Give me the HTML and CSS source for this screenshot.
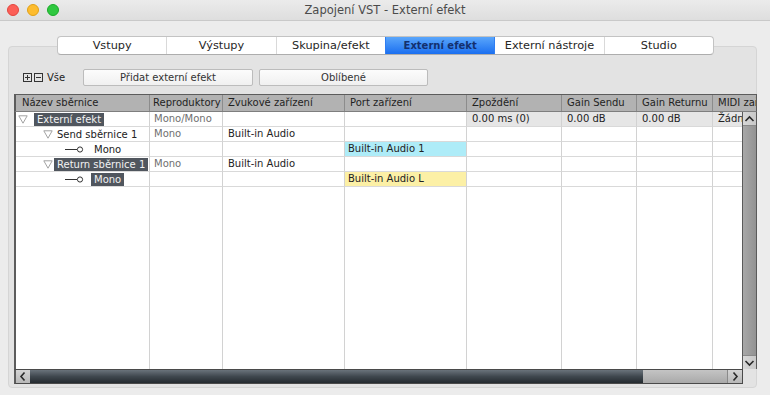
FILE: index.html
```html
<!DOCTYPE html>
<html lang="cs">
<head>
<meta charset="utf-8">
<title>Zapojení VST - Externí efekt</title>
<link rel="stylesheet" href="styles.css">
</head>
<body>
<div class="titlebar">
  <div class="lights"><span class="light l-red"></span><span class="light l-yellow"></span><span class="light l-green"></span></div>
  <div class="title">Zapojení VST - Externí efekt</div>
  <div></div>
</div>
<div class="content">
  <div class="tabs">
    <div class="tab">Vstupy</div>
    <div class="tab">Výstupy</div>
    <div class="tab">Skupina/efekt</div>
    <div class="tab active">Externí efekt</div>
    <div class="tab">Externí nástroje</div>
    <div class="tab">Studio</div>
  </div>
  <div class="group">
    <div class="toolbar">
      <div class="expand">
        <svg class="pm" width="20" height="9" viewBox="0 0 20 9"><rect x="0.5" y="0.5" width="8" height="8" fill="none" stroke="#333"/><path d="M2 4.5h5M4.5 2v5" stroke="#333"/><rect x="11.5" y="0.5" width="8" height="8" fill="none" stroke="#333"/><path d="M13 4.5h5" stroke="#333"/></svg>
        <span>Vše</span>
      </div>
      <button class="btn w1">Přidat externí efekt</button>
      <button class="btn w2">Oblíbené</button>
    </div>
    <div class="table">
      <div class="thead">
        <div class="th c1 first">Název sběrnice</div>
        <div class="th c2 tight">Reproduktory</div>
        <div class="th c3">Zvukové zařízení</div>
        <div class="th c4">Port zařízení</div>
        <div class="th c5">Zpoždění</div>
        <div class="th c6">Gain Sendu</div>
        <div class="th c7">Gain Returnu</div>
        <div class="th c8">MIDI zařízení</div>
      </div>
      <div class="tmain">
        <div class="rows">
          <div class="row">
            <div class="td c1 i0"><svg class="tri" width="10" height="9" viewBox="0 0 10 9"><path d="M0.8 0.8H9.2L5 8.2Z" fill="none" stroke="#a2a2a2"/></svg><span class="name sel gap0">Externí efekt</span></div>
            <div class="td c2 grey">Mono/Mono</div>
            <div class="td c3"></div>
            <div class="td c4"></div>
            <div class="td c5 shade">0.00 ms (0)</div>
            <div class="td c6 shade">0.00 dB</div>
            <div class="td c7 shade">0.00 dB</div>
            <div class="td c8 shade">Žádné</div>
          </div>
          <div class="row">
            <div class="td c1 i1"><svg class="tri" width="10" height="9" viewBox="0 0 10 9"><path d="M0.8 0.8H9.2L5 8.2Z" fill="none" stroke="#a2a2a2"/></svg><span class="name">Send sběrnice 1</span></div>
            <div class="td c2 grey">Mono</div>
            <div class="td c3">Built-in Audio</div>
            <div class="td c4"></div>
            <div class="td c5"></div>
            <div class="td c6"></div>
            <div class="td c7"></div>
            <div class="td c8"></div>
          </div>
          <div class="row">
            <div class="td c1 i2"><svg class="plug" width="20" height="9" viewBox="0 0 20 9"><path d="M0 4.5H12" stroke="#333"/><circle cx="15" cy="4.5" r="2.6" fill="none" stroke="#333"/></svg><span class="name">Mono</span></div>
            <div class="td c2"></div>
            <div class="td c3"></div>
            <div class="td c4 port port-cyan">Built-in Audio 1</div>
            <div class="td c5"></div>
            <div class="td c6"></div>
            <div class="td c7"></div>
            <div class="td c8"></div>
          </div>
          <div class="row">
            <div class="td c1 i1"><svg class="tri" width="10" height="9" viewBox="0 0 10 9"><path d="M0.8 0.8H9.2L5 8.2Z" fill="none" stroke="#a2a2a2"/></svg><span class="name sel">Return sběrnice 1</span></div>
            <div class="td c2 grey">Mono</div>
            <div class="td c3">Built-in Audio</div>
            <div class="td c4"></div>
            <div class="td c5"></div>
            <div class="td c6"></div>
            <div class="td c7"></div>
            <div class="td c8"></div>
          </div>
          <div class="row">
            <div class="td c1 i2"><svg class="plug" width="20" height="9" viewBox="0 0 20 9"><path d="M0 4.5H12" stroke="#333"/><circle cx="15" cy="4.5" r="2.6" fill="none" stroke="#333"/></svg><span class="name sel">Mono</span></div>
            <div class="td c2"></div>
            <div class="td c3"></div>
            <div class="td c4 port port-yellow">Built-in Audio L</div>
            <div class="td c5"></div>
            <div class="td c6"></div>
            <div class="td c7"></div>
            <div class="td c8"></div>
          </div>
          <div class="row filler">
            <div class="td c1"></div>
            <div class="td c2"></div>
            <div class="td c3"></div>
            <div class="td c4"></div>
            <div class="td c5"></div>
            <div class="td c6"></div>
            <div class="td c7"></div>
            <div class="td c8"></div>
          </div>
        </div>
        <div class="vscroll">
          <div class="sbtn vbtn"><svg width="13" height="10" viewBox="0 0 13 10"><path d="M2.5 7L6.5 3L10.5 7" fill="none" stroke="#2a2a2a" stroke-width="1.6"/></svg></div>
          <div class="vtrack"></div>
          <div class="sbtn vbtn"><svg width="13" height="10" viewBox="0 0 13 10"><path d="M2.5 3L6.5 7L10.5 3" fill="none" stroke="#2a2a2a" stroke-width="1.6"/></svg></div>
        </div>
      </div>
      <div class="hbar">
        <div class="hscroll">
          <div class="sbtn hbtn"><svg width="10" height="13" viewBox="0 0 10 13"><path d="M6.5 2.5L3 6.5L6.5 10.5" fill="none" stroke="#2a2a2a" stroke-width="1.6"/></svg></div>
          <div class="thumb"></div>
          <div class="htrack"></div>
          <div class="sbtn hbtn"><svg width="10" height="13" viewBox="0 0 10 13"><path d="M3.5 2.5L7 6.5L3.5 10.5" fill="none" stroke="#2a2a2a" stroke-width="1.6"/></svg></div>
        </div>
      </div>
    </div>
  </div>
</div>
</body>
</html>
```

FILE: styles.css
```css
* { box-sizing: border-box; margin: 0; padding: 0; }
html, body { width: 770px; height: 395px; overflow: hidden; }
body {
  background: #ececec;
  font-family: "DejaVu Sans", "Liberation Sans", sans-serif;
  font-size: 10px;
  color: #222;
}

/* title bar */
.titlebar {
  height: 21px;
  display: grid;
  grid-template-columns: 1fr auto 1fr;
  align-items: center;
  background: linear-gradient(#ebebeb, #dedede);
  border-bottom: 1px solid #c9c9c9;
}
.lights { display: flex; gap: 8px; padding-left: 7px; }
.light { width: 12px; height: 12px; border-radius: 50%; }
.l-red { background: #fc5f57; border: 1px solid #e2463f; }
.l-yellow { background: #fdbc2e; border: 1px solid #e1a116; }
.l-green { background: #2fc840; border: 1px solid #1aab29; }
.title { font-size: 11.5px; color: #4b4b4b; }

/* content */
.content { padding: 15px 0 0 8px; }

.tabs {
  position: relative;
  z-index: 1;
  margin-left: 49px;
  width: 657px;
  height: 19px;
  display: flex;
  background: #fff;
  border: 1px solid #c3c3c3;
  border-bottom-color: #adadad;
  border-radius: 4px;
  overflow: hidden;
}
.tab {
  flex: 1;
  display: flex;
  align-items: center;
  justify-content: center;
  font-size: 11.3px;
  color: #262626;
  border-left: 1px solid #d9d9d9;
}
.tab:first-child { border-left: none; }
.tab.active {
  background: linear-gradient(#5aa6fb, #1b6ff0);
  border-left-color: #2f7ef2;
  color: #13306e;
  font-weight: bold;
  font-size: 10px;
}
.tab.active + .tab { border-left-color: #2f7ef2; }

.group {
  margin-top: -9px;
  width: 749px;
  height: 342px;
  background: #e3e3e3;
  border: 1px solid #d5d5d5;
  border-radius: 4px;
  padding: 22px 0 0 5px;
}

/* toolbar */
.toolbar { display: flex; align-items: center; height: 17px; padding-left: 9px; }
.expand { width: 60px; display: flex; align-items: center; gap: 4px; color: #222; }
.pm { display: block; }
.btn {
  height: 17px;
  font-family: inherit;
  font-size: 10px;
  color: #333;
  background: linear-gradient(#fcfcfc, #f0f0f0);
  border: 1px solid #bcbcbc;
  border-radius: 2px;
}
.w1 { width: 170px; }
.w2 { width: 169px; margin-left: 6px; }

/* table */
.table { margin-top: 8px; width: 743px; }
.thead {
  display: flex;
  height: 18px;
  background: #b2b2b2;
  border: 1px solid #5c5c5c;
  border-left-width: 2px;
  border-bottom-color: #7e7e7e;
}
.th {
  padding-left: 5px;
  line-height: 16px;
  white-space: nowrap;
  overflow: hidden;
  border-right: 1px solid #8c8c8c;
  color: #1f1f1f;
}
.th.first { padding-left: 6px; }
.th.tight { padding-left: 3px; }
.th.c8 { border-right: none; }

.c1 { width: 134px; flex: none; }
.c2 { width: 73px; flex: none; }
.c3 { width: 122px; flex: none; }
.c4 { width: 122px; flex: none; }
.c5 { width: 95px; flex: none; }
.c6 { width: 75px; flex: none; }
.c7 { width: 76px; flex: none; }
.c8 { flex: 1; min-width: 0; }

.tmain { display: flex; height: 257px; }
.rows {
  width: 728px;
  display: flex;
  flex-direction: column;
  background: #fff;
  border-left: 2px solid #5c5c5c;
  overflow: hidden;
}
.row { display: flex; height: 15px; flex: none; }
.row.filler { flex: 1; }
.td {
  height: 100%;
  padding-left: 5px;
  line-height: 14px;
  white-space: nowrap;
  overflow: hidden;
  border-right: 1px solid #d2d2d2;
  border-bottom: 1px solid #d9d9d9;
  display: flex;
  align-items: center;
}
.row.filler .td { border-bottom: none; }
.td.c8 { border-right: none; }
.grey { color: #6f6f6f; padding-left: 4px; }
.shade { background: #e6e6e6; }
.port { padding-left: 3px; }
.port-cyan { background: #aeecf8; }
.port-yellow { background: #fcf0a6; }

.i0 { padding-left: 2px; }
.i1 { padding-left: 27px; }
.i2 { padding-left: 49px; }
.tri { display: block; flex: none; }
.plug { display: block; flex: none; }
.name { padding: 0 3px; line-height: 13px; margin-left: 1px; }
.name.gap0 { margin-left: 6px; }
.plug + .name { margin-left: 6px; }
.sel { background: #50565e; color: #f2f2f2; }

/* scrollbars */
.vscroll {
  width: 15px;
  display: flex;
  flex-direction: column;
  border-left: 1px solid #5a5a5a;
  border-right: 1px solid #5a5a5a;
  background: #9d9d9d;
}
.sbtn { display: flex; align-items: center; justify-content: center; flex: none; }
.vbtn { height: 14px; background: linear-gradient(90deg, #d8d8d8, #c8c8c8); border-bottom: 1px solid #8a8a8a; }
.vbtn:last-child { border-bottom: none; border-top: 1px solid #8a8a8a; }
.vtrack { flex: 1; background: linear-gradient(90deg, #a8a8a8, #929292); }

.hbar { height: 15px; display: flex; }
.hscroll {
  width: 729px;
  display: flex;
  border-left: 2px solid #5c5c5c;
  border-right: 1px solid #4a4a4a;
  border-bottom: 1px solid #4a4a4a;
  border-top: 1px solid #4a4a4a;
}
.hbtn { width: 14px; background: linear-gradient(#d4d4d4, #b8b8b8); }
.thumb { width: 613px; background: linear-gradient(#6a737b, #3f474e 50%, #252b30); }
.htrack { flex: 1; background: linear-gradient(#c4c4c4, #a9a9a9); border-right: 1px solid #8a8a8a; }
```
